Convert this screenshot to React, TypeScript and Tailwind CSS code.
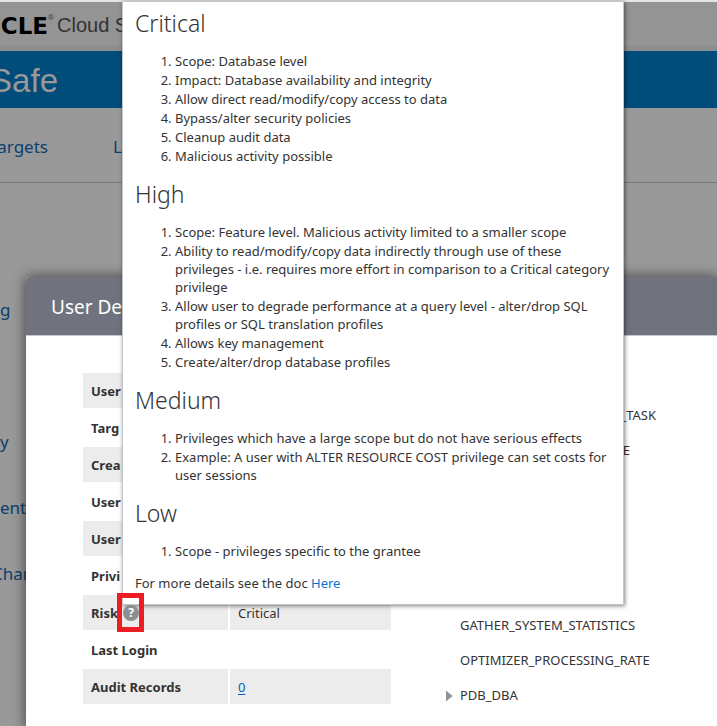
const sections = [
  {
    title: "Critical",
    items: [
      "Scope: Database level",
      "Impact: Database availability and integrity",
      "Allow direct read/modify/copy access to data",
      "Bypass/alter security policies",
      "Cleanup audit data",
      "Malicious activity possible",
    ],
  },
  {
    title: "High",
    items: [
      "Scope: Feature level. Malicious activity limited to a smaller scope",
      "Ability to read/modify/copy data indirectly through use of these privileges - i.e. requires more effort in comparison to a Critical category privilege",
      "Allow user to degrade performance at a query level - alter/drop SQL profiles or SQL translation profiles",
      "Allows key management",
      "Create/alter/drop database profiles",
    ],
  },
  {
    title: "Medium",
    items: [
      "Privileges which have a large scope but do not have serious effects",
      "Example: A user with ALTER RESOURCE COST privilege can set costs for user sessions",
    ],
  },
  { title: "Low", items: ["Scope - privileges specific to the grantee"] },
];

const rows = ["User", "Targ", "Crea", "User", "User", "Privi", "Risk", "Last Login", "Audit Records"];

function RiskHelp() {
  return (
    <div
      role="tooltip"
      className="absolute left-[122px] top-px z-20 w-[502px] border border-[#c4c6ca] bg-white px-3 pb-3 pt-[5px] shadow-[1px_1px_4px_rgba(0,0,0,0.5)]"
    >
      {sections.map((s) => (
        <section key={s.title} className="mt-[13px] first:mt-0">
          <h2 className="mb-[13px] text-[23px] font-light leading-8">{s.title}</h2>
          <ol className="list-decimal pl-10">
            {s.items.map((item) => (
              <li key={item} className="mb-px">
                {item}
              </li>
            ))}
          </ol>
        </section>
      ))}
      <p className="mt-[14px]">
        For more details see the doc{" "}
        <a href="#doc" className="text-[#0572ce]">
          Here
        </a>
      </p>
    </div>
  );
}

function UserTable() {
  return (
    <table className="w-[308px] shrink-0 table-fixed border-separate border-spacing-0 self-start">
      <tbody>
        {rows.map((label, i) => (
          <tr key={i}>
            <th
              scope="row"
              className={`h-[37px] w-[147px] border-b-2 border-r-2 border-white px-2 text-left font-bold ${i % 2 ? "" : "bg-[#ececec]"}`}
            >
              <span className="flex items-center gap-[5px]">
                {label}
                {label === "Risk" && (
                  <button
                    type="button"
                    aria-label="Risk help"
                    className="relative z-40 size-4 rounded-full bg-[#8c8f92] text-center text-[12px] leading-4 text-white"
                  >
                    ?
                    <span className="absolute -left-[6px] -top-[12px] h-[39px] w-[27px] border-[5px] border-[#ee1c25]" />
                  </button>
                )}
              </span>
            </th>
            <td className={`border-b-2 border-white px-2 ${i % 2 ? "" : "bg-[#ececec]"}`}>
              {label === "Risk" && "Critical"}
              {label === "Audit Records" && (
                <a href="#audit" className="text-[#0560b0] underline underline-offset-2">
                  0
                </a>
              )}
            </td>
          </tr>
        ))}
      </tbody>
    </table>
  );
}

function PrivilegeTree() {
  return (
    <ul className="ml-[53px] mt-[25px] leading-[35px]">
      <li className="flex h-[35px] w-[212px] justify-end">_TASK</li>
      <li className="flex h-[35px] w-[186px] justify-end">E</li>
      <li className="h-[140px]" />
      <li className="pl-4">GATHER_SYSTEM_STATISTICS</li>
      <li className="pl-4">OPTIMIZER_PROCESSING_RATE</li>
      <li className="flex items-center">
        <button type="button" aria-label="Expand PDB_DBA" className="w-4 pl-[2px]">
          <svg width="7" height="12" viewBox="0 0 7 12">
            <path d="M0 0.5L6.5 6L0 11.5Z" fill="#8f9296" />
          </svg>
        </button>
        PDB_DBA
      </li>
    </ul>
  );
}

export default function App() {
  return (
    <div className="relative flex min-h-screen flex-col overflow-hidden bg-[#999] font-['Noto_Sans','Open_Sans',sans-serif] text-[13px] leading-[18px] text-[#333]">
      <header className="flex h-[51px] items-center border-b-[5px] border-t-2 border-b-[#8d8d8d] border-t-[#e4e4e4] bg-[#949494] font-['Liberation_Sans',sans-serif]">
        <div className="flex w-12 justify-end pt-[3px] font-['DejaVu_Sans',sans-serif] text-[23px] font-bold leading-8 text-black">CLE</div>
        <span className="w-[9px] self-start pt-2 text-[8px] leading-4">®</span>
        <span className="pt-[2px] text-[20px] leading-8 text-[#333]">Cloud S</span>
      </header>
      <div className="flex h-[57px] items-center bg-[#004c7a] font-['Liberation_Sans',sans-serif]">
        <h1 className="flex w-[58px] justify-end pt-[2px] text-[33px] leading-9 text-[#999]">Safe</h1>
      </div>
      <nav className="flex h-[75px] items-center border-b border-[#777] pt-1 text-[17px] text-[#0b3f6e]">
        <a href="#targets" className="flex w-12 justify-end">
          Targets
        </a>
        <a href="#library" className="ml-[65px]">
          L
        </a>
      </nav>
      <div className="mt-[94px] flex grow">
        <aside className="w-[26px] overflow-hidden text-[17px] leading-[66px] text-[#0b3f6e]">
          <a href="#g" className="block h-[132px]">g</a>
          <a href="#y" className="block">y</a>
          <a href="#ent" className="block">ent</a>
          <a href="#char" className="-ml-2 block">Char</a>
        </aside>
        <main className="flex grow flex-col rounded-tl-[4px] bg-white shadow-[0_0_14px_rgba(0,0,0,0.6)]">
          <h2 className="h-[59px] rounded-tl-[4px] border-b border-[#c4c7d0] bg-[#70737d] pl-[25px] text-[19px] leading-[60px] text-white">
            User Details
          </h2>
          <div className="flex pb-4 pl-[57px] pt-[37px]">
            <UserTable />
            <PrivilegeTree />
          </div>
        </main>
      </div>
      <RiskHelp />
    </div>
  );
}
